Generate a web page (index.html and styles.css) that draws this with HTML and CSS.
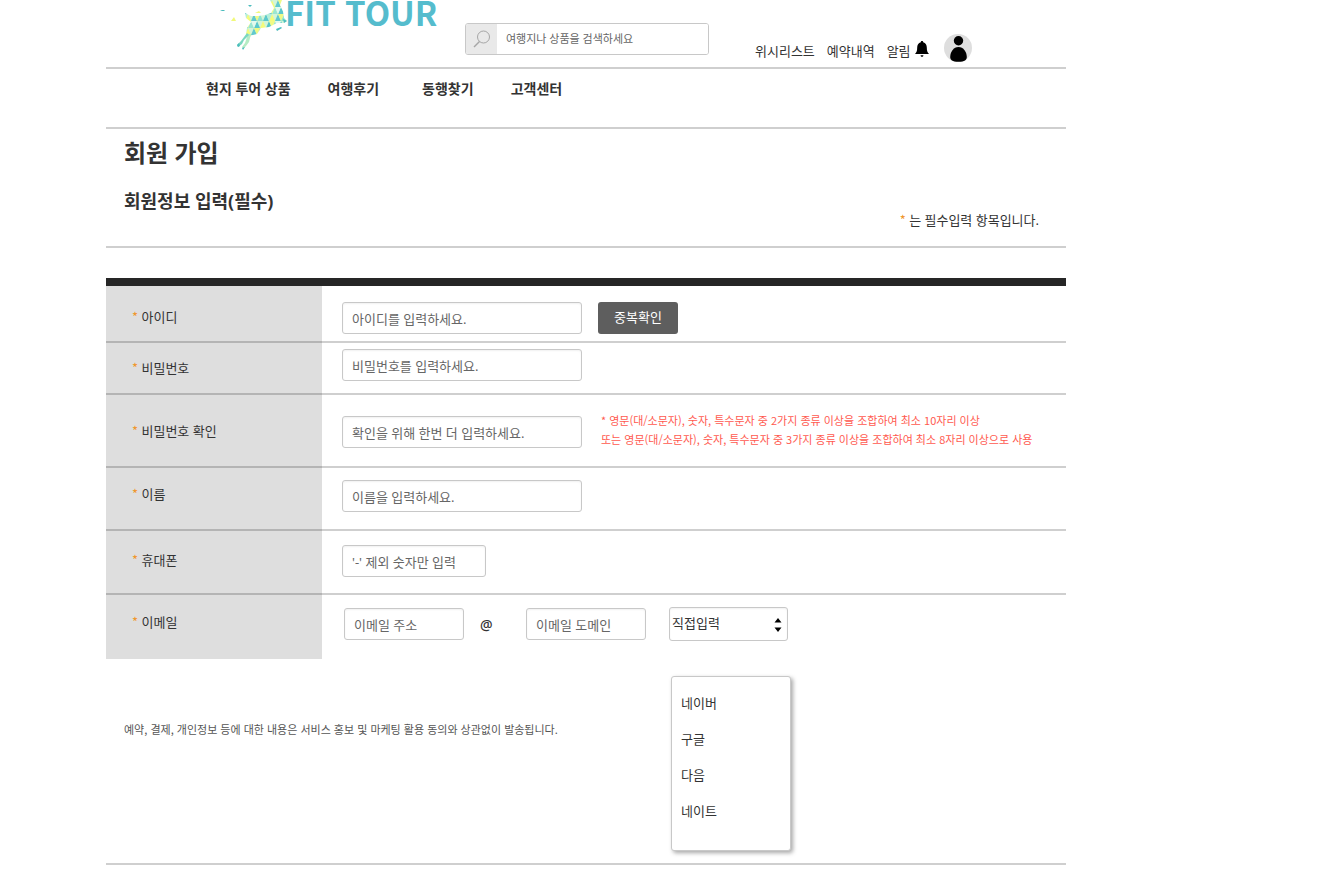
FILE: index.html
```html
<!DOCTYPE html>
<html lang="ko">
<head>
<meta charset="utf-8">
<meta name="viewport" content="width=device-width, initial-scale=1">
<title>회원 가입 - FIT TOUR</title>
<link rel="stylesheet" href="styles.css">
</head>
<body>
<div class="page">
  <header class="header">
    <a class="logo" href="#">
      <svg class="logo-mark" viewBox="0 0 72 55" aria-hidden="true">
        <defs>
          <pattern id="mosaic" width="24" height="14" patternUnits="userSpaceOnUse">
            <rect width="24" height="14" fill="#d3f5d8"/>
            <path d="M0 7l3-7 3 7z" fill="#5cc8cc"/>
            <path d="M6 7l3-7 3 7z" fill="#f4fb7c"/>
            <path d="M12 7l3-7 3 7z" fill="#62c9ce"/>
            <path d="M18 7l3-7 3 7z" fill="#8fe3d0"/>
            <path d="M3 0h6l-3 7z" fill="#b4efd8"/>
            <path d="M15 0h6l-3 7z" fill="#eefa86"/>
            <path d="M-3 14l3-7 3 7zM21 14l3-7 3 7z" fill="#f4fb7c"/>
            <path d="M3 14l3-7 3 7z" fill="#56c5c4"/>
            <path d="M9 14l3-7 3 7z" fill="#9be6d2"/>
            <path d="M15 14l3-7 3 7z" fill="#5cc8cc"/>
            <path d="M6 7h6l-3 7z" fill="#f1fb84"/>
            <path d="M12 7h6l-3 7z" fill="#e2faee"/>
          </pattern>
        </defs>
        <path fill="url(#mosaic)" d="M30 13L36 16 43 16 50 15 56 13 59 8 55 0H67L65 5 68 11 69 18 72 21 69 23 62 23 54 27 46 28 42 34 38 35 34 37 31 34 32 28 36 22 31 18z"/>
        <path fill="#b5ecc4" d="M33 34L36 34 34 42 31 46 28 49 27 47 30 43z"/>
        <path fill="#7ad8c0" d="M32 33L34 35 29 40 27 44 23 47 22 45 26 41z"/>
        <path fill="#4bbcbd" d="M27 48l3-1-2 3zM22 45l2-2 1 3-2 1zM61 29l5-2 1 1-5 3zM68 19l4 2-3 2zM5 10h5l-1 1H7zM33 5h4l-2 2z"/>
        <path fill="#f1f97b" d="M16 21l3-4 2 4zM40 13l4-2 2 2z"/>
      </svg>
      <span class="logo-text">FIT TOUR</span>
    </a>
    <form class="search" role="search">
      <button class="search-button" type="button" aria-label="검색">
        <svg viewBox="0 0 18 18" width="18" height="18" fill="none" stroke="#a6a6a6" aria-hidden="true">
          <circle cx="10.500" cy="7" r="6"/>
          <path d="M6.500 11.500L1 17" stroke-width="1.500"/>
        </svg>
      </button>
      <input class="search-input" type="search" aria-label="검색어" placeholder="여행지나 상품을 검색하세요">
    </form>
    <div class="user-links">
      <a href="#">위시리스트</a>
      <a href="#">예약내역</a>
      <a class="alarm" href="#">알림
        <svg viewBox="0 0 14 16" width="14" height="16" aria-hidden="true">
          <path d="M7 0c.8 0 1.200.5 1.200 1.300C10.700 2 11.800 4 11.800 6.500c0 3.500.7 5 2.200 6.500H0c1.500-1.500 2.200-3 2.200-6.500C2.200 4 3.300 2 5.800 1.300 5.800.5 6.200 0 7 0zM5.600 14.300h2.800c0 1-.6 1.500-1.400 1.500s-1.400-.5-1.400-1.500z"/>
        </svg>
      </a>
    </div>
    <a class="avatar" href="#" aria-label="내 정보">
      <svg viewBox="0 0 28 28" width="28" height="28" aria-hidden="true">
        <circle cx="14" cy="14" r="14" fill="#dedede"/>
        <circle cx="14.500" cy="6.700" r="4.700"/>
        <path d="M14.500 13c5 0 8.300 5 8.300 10 0 3-2 4.800-8.300 4.800S6.200 26 6.200 23c0-5 3.300-10 8.300-10z"/>
      </svg>
    </a>
  </header>

  <nav class="nav">
    <a href="#">현지 투어 상품</a>
    <a href="#">여행후기</a>
    <a class="nav-mate" href="#">동행찾기</a>
    <a href="#">고객센터</a>
  </nav>

  <main>
    <section class="intro">
      <h1>회원 가입</h1>
      <div class="intro-row">
        <h2>회원정보 입력(필수)</h2>
        <p class="note"><span class="star">*</span> 는 필수입력 항목입니다.</p>
      </div>
    </section>

    <form class="join">
      <div class="row row-id">
        <label class="name" for="user-id"><span class="star">*</span> 아이디</label>
        <div class="field">
          <input class="box" id="user-id" type="text" placeholder="아이디를 입력하세요.">
          <button class="check" type="button">중복확인</button>
        </div>
      </div>
      <div class="row row-password">
        <label class="name" for="password"><span class="star">*</span> 비밀번호</label>
        <div class="field">
          <input class="box" id="password" type="password" placeholder="비밀번호를 입력하세요.">
        </div>
      </div>
      <div class="row row-confirm">
        <label class="name" for="confirm"><span class="star">*</span> 비밀번호 확인</label>
        <div class="field">
          <input class="box" id="confirm" type="password" placeholder="확인을 위해 한번 더 입력하세요.">
          <p class="hint">* 영문(대/소문자), 숫자, 특수문자 중 2가지 종류 이상을 조합하여 최소 10자리 이상<br>또는 영문(대/소문자), 숫자, 특수문자 중 3가지 종류 이상을 조합하여 최소 8자리 이상으로 사용</p>
        </div>
      </div>
      <div class="row row-name">
        <label class="name" for="user-name"><span class="star">*</span> 이름</label>
        <div class="field">
          <input class="box" id="user-name" type="text" placeholder="이름을 입력하세요.">
        </div>
      </div>
      <div class="row row-phone">
        <label class="name" for="phone"><span class="star">*</span> 휴대폰</label>
        <div class="field">
          <input class="box box-phone" id="phone" type="tel" placeholder="'-' 제외 숫자만 입력">
        </div>
      </div>
      <div class="row row-email">
        <label class="name" for="email"><span class="star">*</span> 이메일</label>
        <div class="field">
          <input class="box box-email" id="email" type="text" placeholder="이메일 주소">
          <span class="at">@</span>
          <input class="box box-email" type="text" aria-label="이메일 도메인" placeholder="이메일 도메인">
          <div class="picker">
            <select class="picker-select" aria-label="도메인 선택">
              <option>직접입력</option>
            </select>
            <svg class="picker-arrows" viewBox="0 0 8 14" width="8" height="14" aria-hidden="true">
              <path d="M4 0l3.500 4.500h-7zM4 14l3.500-4.500h-7z"/>
            </svg>
            <ul class="menu">
              <li><button type="button">네이버</button></li>
              <li><button type="button">구글</button></li>
              <li><button type="button">다음</button></li>
              <li><button type="button">네이트</button></li>
            </ul>
          </div>
        </div>
      </div>
    </form>
    <p class="notice">예약, 결제, 개인정보 등에 대한 내용은 서비스 홍보 및 마케팅 활용 동의와 상관없이 발송됩니다.</p>
  </main>
</div>
</body>
</html>
```
FILE: styles.css
```css
:root {
  --line: rgba(0, 0, 0, 0.19);
  --edge: #c8c8c8;
  --korean: "Noto Sans CJK KR", sans-serif;
}

* {
  box-sizing: border-box;
}

body {
  margin: 0;
  background: #fff;
  color: #333;
  font-family: "Noto Sans", var(--korean);
  font-size: 13px;
  line-height: 20px;
}

h1, h2, p, ul {
  margin: 0;
  padding: 0;
}

a {
  color: inherit;
  text-decoration: none;
}

input, button, select {
  font: inherit;
  color: inherit;
}

.page {
  max-width: 960px;
  margin-left: 106px;
}

/* Header */
.header {
  display: flex;
  align-items: flex-start;
  height: 69px;
  border-bottom: 2px solid var(--line);
}

.logo {
  display: flex;
  align-items: flex-start;
  width: 359px;
  padding-left: 109px;
}

.logo-mark {
  flex: none;
  width: 72px;
  height: 55px;
}

.logo-text {
  margin-left: -2px;
  color: #55bccd;
  font-family: var(--korean);
  font-size: 33px;
  font-weight: 700;
  line-height: 24px;
  white-space: nowrap;
}

.search {
  display: flex;
  width: 244px;
  height: 32px;
  margin-top: 23px;
  overflow: hidden;
  border: 1px solid var(--edge);
  border-radius: 3px;
}

.search-button {
  display: flex;
  align-items: center;
  justify-content: center;
  width: 31px;
  padding: 0;
  border: 0;
  background: #e9e9e9;
}

.search-input {
  flex: 1;
  min-width: 0;
  padding: 0 9px;
  border: 0;
  background: #fff;
  font-size: 11px;
}

.user-links {
  display: flex;
  gap: 12px;
  margin: 41px 0 0 46px;
}

.alarm {
  display: flex;
  align-items: center;
  gap: 4px;
}

.alarm svg {
  margin-bottom: 4px;
}

.avatar {
  margin: 34px 0 0 15px;
}

.avatar svg {
  display: block;
}

.nav {
  display: flex;
  gap: 37px;
  padding: 10px 0 28px 100px;
  border-bottom: 2px solid var(--line);
  font-size: 14px;
  font-weight: 700;
}

.nav-mate {
  margin-left: 6px;
}

/* Title */
.intro {
  padding: 6px 27px 16px 18px;
  border-bottom: 2px solid var(--line);
}

h1 {
  margin-bottom: 17px;
  font-size: 24px;
  line-height: 36px;
}

.intro-row {
  display: flex;
  justify-content: space-between;
  height: 42px;
}

h2 {
  font-size: 18px;
  line-height: 26px;
}

.note {
  align-self: flex-end;
}

.star {
  color: #f0962d;
  font-family: var(--korean);
}

/* Form */
.join {
  margin-top: 30px;
  border-top: 8px solid #262626;
}

.row {
  display: grid;
  grid-template-columns: 216px 1fr;
}

.name,
.field {
  border-bottom: 2px solid var(--line);
}

.name {
  padding-left: 26px;
  background: #dedede;
}

.field {
  display: flex;
  align-items: flex-start;
  padding-left: 20px;
}

.row-id .name { padding-top: 21px; }
.row-id .field { padding-top: 16px; padding-bottom: 7px; }
.row-password .name { padding-top: 15px; }
.row-password .field { padding-top: 6px; padding-bottom: 12px; }
.row-confirm .name { padding-top: 26px; }
.row-confirm .field { padding-top: 16px; padding-bottom: 17px; }
.row-name .name { padding-top: 16px; }
.row-name .field { padding-top: 12px; padding-bottom: 17px; }
.row-phone .name { padding-top: 19px; }
.row-phone .field { padding-top: 14px; padding-bottom: 16px; }
.row-email .name { padding-top: 17px; border-bottom: 0; }
.row-email .field { padding: 12px 0 18px 22px; border-bottom: 0; }

.box {
  width: 240px;
  height: 32px;
  padding: 2px 9px 0;
  border: 1px solid var(--edge);
  border-radius: 3px;
  background: #fff;
  box-shadow: inset 0 1px 2px rgba(0, 0, 0, 0.06);
}

.box::placeholder,
.search-input::placeholder {
  color: #666;
  opacity: 1;
}

.row-confirm .box {
  margin-top: 5px;
}

.box-phone {
  width: 144px;
}

.box-email {
  width: 120px;
  margin-top: 1px;
}

.check {
  width: 80px;
  height: 32px;
  margin-left: 16px;
  padding: 0 0 2px;
  border: 0;
  border-radius: 3px;
  background: #5e5e5e;
  color: #fff;
}

.hint {
  margin-left: 19px;
  color: #ff5a50;
  font-family: var(--korean);
  font-size: 11px;
  line-height: 19px;
}

.at {
  width: 62px;
  padding: 8px 0 0 16px;
  font-size: 14px;
  font-weight: 500;
}

.picker {
  position: relative;
  width: 119px;
  margin-left: 23px;
}

.picker-select {
  display: block;
  width: 100%;
  height: 34px;
  padding: 0 20px 3px 2px;
  appearance: none;
  border: 1px solid var(--edge);
  border-radius: 3px;
  background: #fff;
  box-shadow: inset 0 1px 2px rgba(0, 0, 0, 0.06);
}

.picker-arrows {
  position: absolute;
  top: 11px;
  right: 6px;
  pointer-events: none;
}

.menu {
  position: absolute;
  top: 69px;
  left: 2px;
  width: 120px;
  padding: 8px 0 21px;
  border: 1px solid var(--edge);
  border-radius: 3px;
  background: #fff;
  box-shadow: 2px 2px 4px rgba(0, 0, 0, 0.35);
  list-style: none;
}

.menu button {
  display: block;
  width: 100%;
  height: 36px;
  padding: 0 9px;
  border: 0;
  background: none;
  text-align: left;
}

.notice {
  padding: 60px 0 124px 18px;
  border-bottom: 2px solid var(--line);
  color: #555;
  font-family: var(--korean);
  font-size: 11px;
}
```
